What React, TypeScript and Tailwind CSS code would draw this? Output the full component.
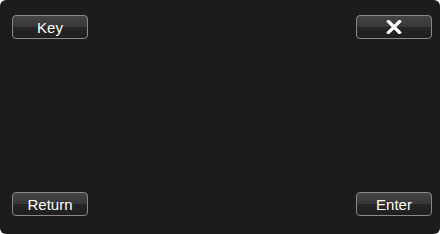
import React from 'react';

const PadButton: React.FC<{ children: React.ReactNode }> = ({ children }) => (
    <button className="relative w-[76px] h-[24px] rounded-[4px] border border-[#8a8a8a] overflow-hidden bg-[linear-gradient(to_bottom,#454545_0%,#383838_48%,#262626_52%,#1f1f1f_100%)] text-white text-[15px] leading-none flex items-center justify-center font-['Liberation_Sans',Arial,sans-serif]">
        {children}
    </button>
);

const App: React.FC = () => {
    return (
        <div className="w-[440px] h-[234px] bg-white">
            <div className="w-full h-full rounded-[6px] bg-[#1c1c1c] flex flex-col justify-between pl-[12px] pr-[8px] pt-[15px] pb-[18px]">
                <div className="flex justify-between">
                    <PadButton>Key</PadButton>
                    <PadButton>
                        <svg width="16" height="14" viewBox="0 0 16 14">
                            <path d="M2.5 1.5 L13.5 12.5 M13.5 1.5 L2.5 12.5" stroke="white" strokeWidth="3.2" strokeLinecap="square" />
                        </svg>
                    </PadButton>
                </div>
                <div className="flex justify-between">
                    <PadButton>Return</PadButton>
                    <PadButton>Enter</PadButton>
                </div>
            </div>
        </div>
    );
};

export default App;
